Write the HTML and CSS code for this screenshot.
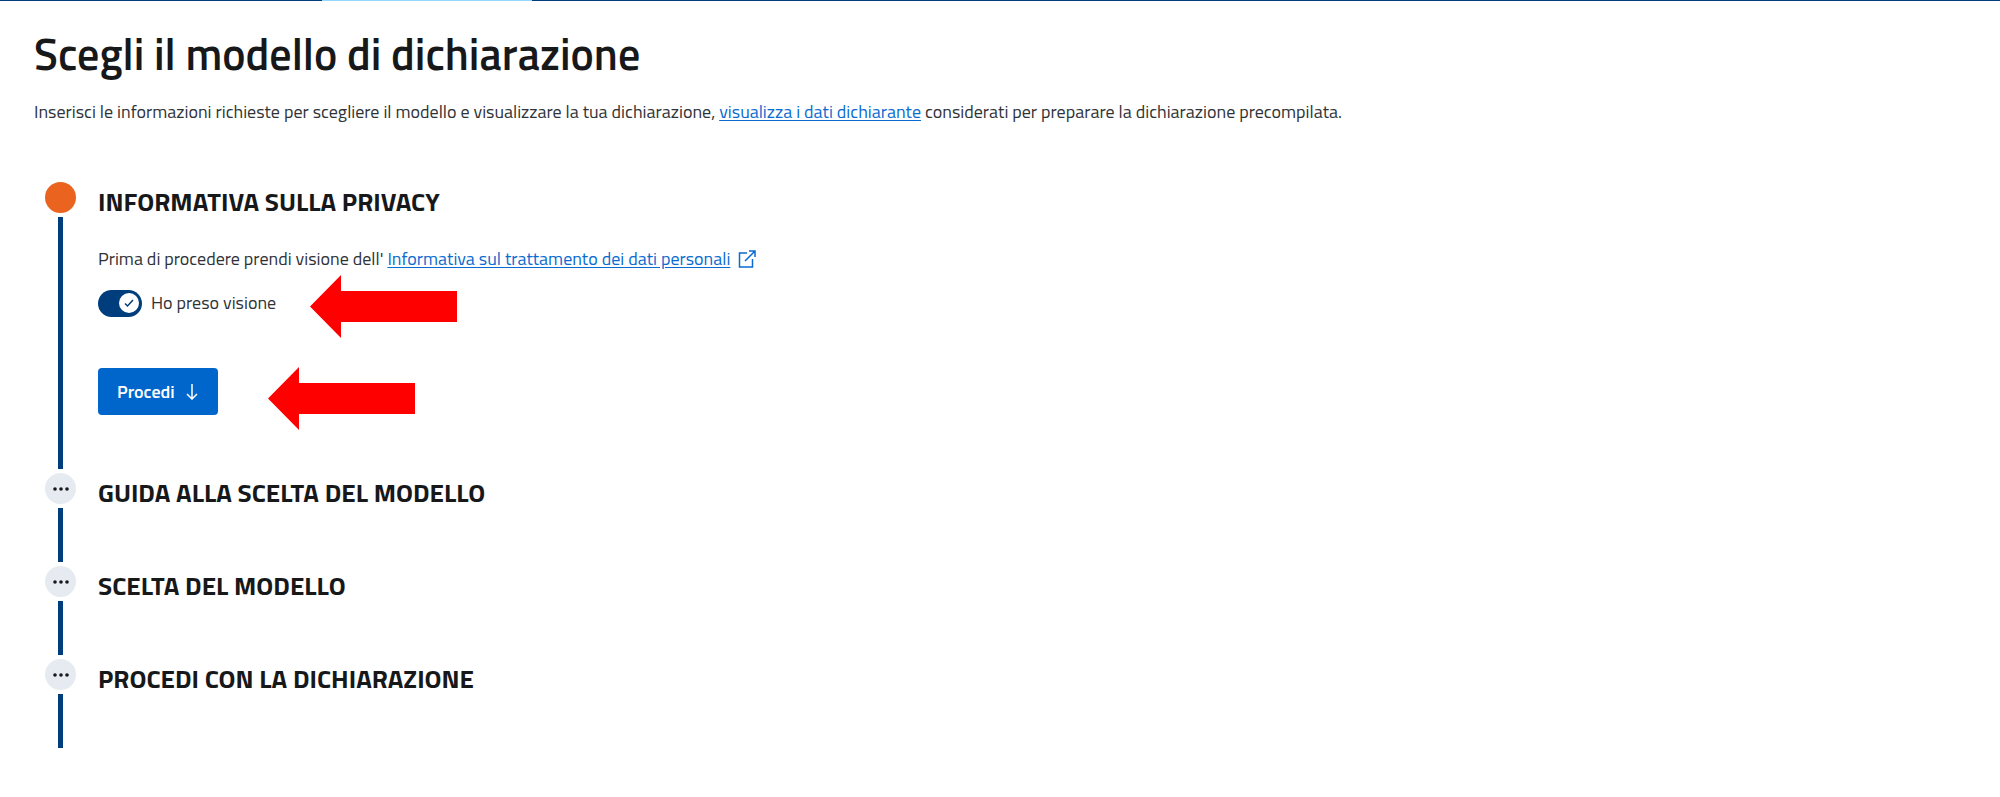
FILE: index.html
```html
<!DOCTYPE html>
<html lang="it">
<head>
<meta charset="utf-8">
<title>Scegli il modello di dichiarazione</title>
<link rel="stylesheet" href="styles.css">
</head>
<body>
<div class="nav-edge"><span class="nav-active"></span></div>
<main class="page">
  <h1 class="title">Scegli il modello di dichiarazione</h1>
  <p class="intro">Inserisci le informazioni richieste per scegliere il modello e visualizzare la tua dichiarazione, <a class="link" href="#">visualizza i dati dichiarante</a> considerati per preparare la dichiarazione precompilata.</p>
  <ol class="steps">
    <li class="step">
      <div class="rail"><span class="dot dot-current"></span><span class="line"></span></div>
      <div class="content">
        <h2 class="step-title">INFORMATIVA SULLA PRIVACY</h2>
        <p class="text">Prima di procedere prendi visione dell' <a class="link" href="#">Informativa sul trattamento dei dati personali</a><svg class="external" viewBox="0 0 18 18" aria-hidden="true"><path d="M9 3H1.500v14H14.500V9M7 11 17 1M11 1h6v6"/></svg></p>
        <div class="row consent">
          <label class="toggle">
            <input class="toggle-input" type="checkbox" checked>
            <span class="track"><span class="knob"><svg class="check" viewBox="0 0 12 12" aria-hidden="true"><path d="M2 6.5 4.5 9 10 3"/></svg></span></span>
            Ho preso visione
          </label>
          <svg class="pointer pointer-consent" viewBox="0 0 147 63" aria-hidden="true"><path d="M0 31.500 31 0v16h116v31H31v16z"/></svg>
        </div>
        <div class="row action">
          <button class="button" type="button">Procedi<svg class="down" viewBox="0 0 12 16" aria-hidden="true"><path d="M6 0v15M1 10l5 5 5-5"/></svg></button>
          <svg class="pointer pointer-button" viewBox="0 0 147 63" aria-hidden="true"><path d="M0 31.500 31 0v16h116v31H31v16z"/></svg>
        </div>
      </div>
    </li>
    <li class="step">
      <div class="rail"><span class="dot"><svg class="dots" viewBox="0 0 16 4" aria-hidden="true"><circle cx="2" cy="2" r="1.800"/><circle cx="8" cy="2" r="1.800"/><circle cx="14" cy="2" r="1.800"/></svg></span><span class="line"></span></div>
      <div class="content"><h2 class="step-title">GUIDA ALLA SCELTA DEL MODELLO</h2></div>
    </li>
    <li class="step">
      <div class="rail"><span class="dot"><svg class="dots" viewBox="0 0 16 4" aria-hidden="true"><circle cx="2" cy="2" r="1.800"/><circle cx="8" cy="2" r="1.800"/><circle cx="14" cy="2" r="1.800"/></svg></span><span class="line"></span></div>
      <div class="content"><h2 class="step-title">SCELTA DEL MODELLO</h2></div>
    </li>
    <li class="step">
      <div class="rail"><span class="dot"><svg class="dots" viewBox="0 0 16 4" aria-hidden="true"><circle cx="2" cy="2" r="1.800"/><circle cx="8" cy="2" r="1.800"/><circle cx="14" cy="2" r="1.800"/></svg></span><span class="line"></span></div>
      <div class="content"><h2 class="step-title">PROCEDI CON LA DICHIARAZIONE</h2></div>
    </li>
  </ol>
</main>
</body>
</html>
```

FILE: styles.css
```css
* { box-sizing: border-box; }
body {
  margin: 0;
  background: #fff;
  color: #2f3338;
  font: 18px/28px "Titillium Web", Roboto, sans-serif;
}
.nav-edge { display: flex; height: 1px; padding-left: 322px; background: #003d7c; }
.nav-active { width: 210px; background: #93d7ff; }
.page { padding: 25px 34px; }
.title { margin: 0; color: #17181a; font-size: 44px; line-height: 56px; font-weight: 600; }
.intro { margin: 16px 0 56px; }
.link { color: #0a6bd0; text-decoration: underline; text-underline-offset: 2px; }
.steps { margin: 0; padding: 0 0 0 11px; list-style: none; }
.step { display: flex; gap: 22px; }
.rail { display: flex; flex-direction: column; align-items: center; gap: 4px; width: 31px; padding-bottom: 4px; }
.dot { display: flex; align-items: center; justify-content: center; width: 31px; height: 31px; border-radius: 50%; background: #e6ebf2; }
.dot-current { background: #ea641f; }
.dots { width: 16px; height: 4px; fill: #17181a; }
.line { flex: 1; width: 5px; background: #003d7c; }
.content { flex: 1; padding: 2px 0 55px; }
.step-title { margin: 0; color: #17181a; font-size: 26px; line-height: 36px; font-weight: 700; }
.text { display: flex; align-items: center; gap: 4px; margin: 25px 0 16px; }
.external { width: 18px; height: 18px; margin-left: 4px; fill: none; stroke: #0a6bd0; stroke-width: 1.5; }
.row { position: relative; display: flex; align-items: center; }
.consent { margin-bottom: 51px; }
.action { margin-bottom: 3px; }
.toggle { display: flex; align-items: center; gap: 9px; cursor: pointer; }
.toggle-input { position: absolute; width: 44px; height: 27px; margin: 0; opacity: 0; }
.track { display: flex; align-items: center; justify-content: flex-end; width: 44px; height: 27px; padding-right: 3px; border-radius: 14px; background: #003d7c; }
.knob { display: flex; align-items: center; justify-content: center; width: 20px; height: 20px; border-radius: 50%; background: #fff; }
.check { width: 12px; height: 12px; fill: none; stroke: #003d7c; stroke-width: 1.5; }
.button { display: flex; align-items: center; justify-content: center; gap: 11px; height: 47px; padding: 0 20px 0 19px; border: 0; border-radius: 4px; background: #06c; color: #fff; font: inherit; font-weight: 600; cursor: pointer; }
.down { width: 12px; height: 16px; fill: none; stroke: #fff; stroke-width: 1.5; }
.pointer { position: absolute; width: 147px; height: 63px; fill: #f00; }
.pointer-consent { top: -14px; left: 212px; }
.pointer-button { top: -1px; left: 170px; }
```
